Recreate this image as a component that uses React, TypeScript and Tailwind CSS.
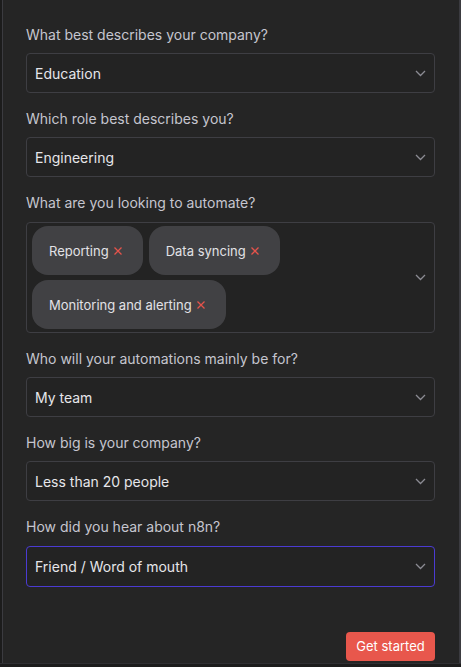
import React from "react";

type Field = {
  label: string;
  value?: string;
  tags?: string[];
  focused?: boolean;
};

const fields: Field[] = [
  { label: "What best describes your company?", value: "Education" },
  { label: "Which role best describes you?", value: "Engineering" },
  {
    label: "What are you looking to automate?",
    tags: ["Reporting", "Data syncing", "Monitoring and alerting"],
  },
  { label: "Who will your automations mainly be for?", value: "My team" },
  { label: "How big is your company?", value: "Less than 20 people" },
  { label: "How did you hear about n8n?", value: "Friend / Word of mouth", focused: true },
];

function Chevron() {
  return (
    <svg width="11" height="7" viewBox="0 0 11 7" fill="none" className="shrink-0">
      <path d="M1 1l4.5 4.5L10 1" stroke="#8b8b93" strokeWidth="1.3" />
    </svg>
  );
}

function Tag({ text }: { text: string }) {
  return (
    <div className="flex h-[49px] items-center gap-[5px] rounded-2xl bg-[#414144] pl-[17px] pr-[21px] pt-[3px] text-[13px] text-[#e2e2e6]">
      <span>{text}</span>
      <svg width="8" height="8" viewBox="0 0 8 8" className="mt-[-2px]">
        <path d="M0.5 0.5l7 7M7.5 0.5l-7 7" stroke="#e5534b" strokeWidth="1.3" />
      </svg>
    </div>
  );
}

export default function App() {
  return (
    <div
      className="flex h-[667px] w-[461px] flex-col bg-[#1c1c1c]"
      style={{ fontFamily: "Inter, 'Noto Sans', sans-serif" }}
    >
      <div className="flex h-[664px] border-b border-[#2f2f33] pl-[2px]">
        <div className="flex flex-1 flex-col border-l border-r-2 border-[#3b3b40] bg-[#252525] pl-[23px] pr-[24px] pt-[25px]">
          <div className="flex flex-col gap-4">
            {fields.map((f) => (
              <div key={f.label} className="flex flex-col">
                <label className="mb-2 h-5 text-[14px] leading-5 text-[#c5c5cf]">{f.label}</label>
                {f.tags ? (
                  <div className="mt-px flex items-center rounded border border-[#3e3e43] bg-[#232323] py-[3px] pl-[5px] pr-[8px]">
                    <div className="flex flex-1 flex-wrap gap-x-[6px] gap-y-[5px]">
                      {f.tags.map((t) => (
                        <Tag key={t} text={t} />
                      ))}
                    </div>
                    <Chevron />
                  </div>
                ) : (
                  <div
                    className={
                      f.focused
                        ? "mt-px flex h-[41px] items-center justify-between rounded border border-[#4b3bd2] bg-[#232323] pl-2 pr-[8px]"
                        : "flex h-10 items-center justify-between rounded border border-[#3e3e43] bg-[#232323] pl-2 pr-[8px]"
                    }
                  >
                    <span className="text-[14px] text-[#e6e6ea]">{f.value}</span>
                    <Chevron />
                  </div>
                )}
              </div>
            ))}
          </div>
          <div className="mt-[45px] flex justify-end">
            <button className="h-[29px] w-[89px] rounded bg-[#e8574c] text-[13px] text-white">
              Get started
            </button>
          </div>
        </div>
      </div>
    </div>
  );
}
